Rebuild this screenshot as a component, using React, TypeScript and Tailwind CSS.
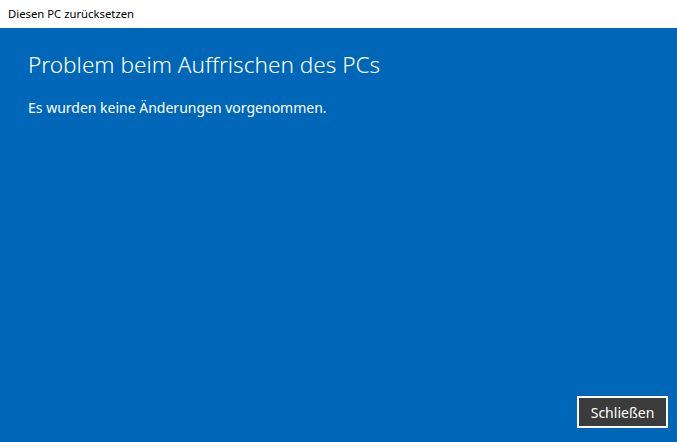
export default function App() {
  return (
    <div className="w-[677px] h-[442px] flex flex-col bg-[#0067b8] overflow-hidden" style={{ fontFamily: '"Noto Sans", "Open Sans", sans-serif' }}>
      <div className="h-[28px] bg-white flex items-center pl-[8px] text-[11.3px] text-black shrink-0">
        Diesen PC zurücksetzen
      </div>
      <div className="flex-1 flex flex-col px-[28px] pt-[21px] text-white">
        <h1 className="text-[22.6px] leading-[32px] font-light">Problem beim Auffrischen des PCs</h1>
        <p className="mt-[17px] text-[14px] leading-[20px]">Es wurden keine Änderungen vorgenommen.</p>
        <div className="flex-1" />
        <div className="flex justify-end pb-[14px] -mr-[19px]">
          <button className="w-[91px] h-[32px] border-2 border-white bg-[#3b3b3b] text-white text-[14px] flex items-center justify-center">
            Schließen
          </button>
        </div>
      </div>
    </div>
  );
}
